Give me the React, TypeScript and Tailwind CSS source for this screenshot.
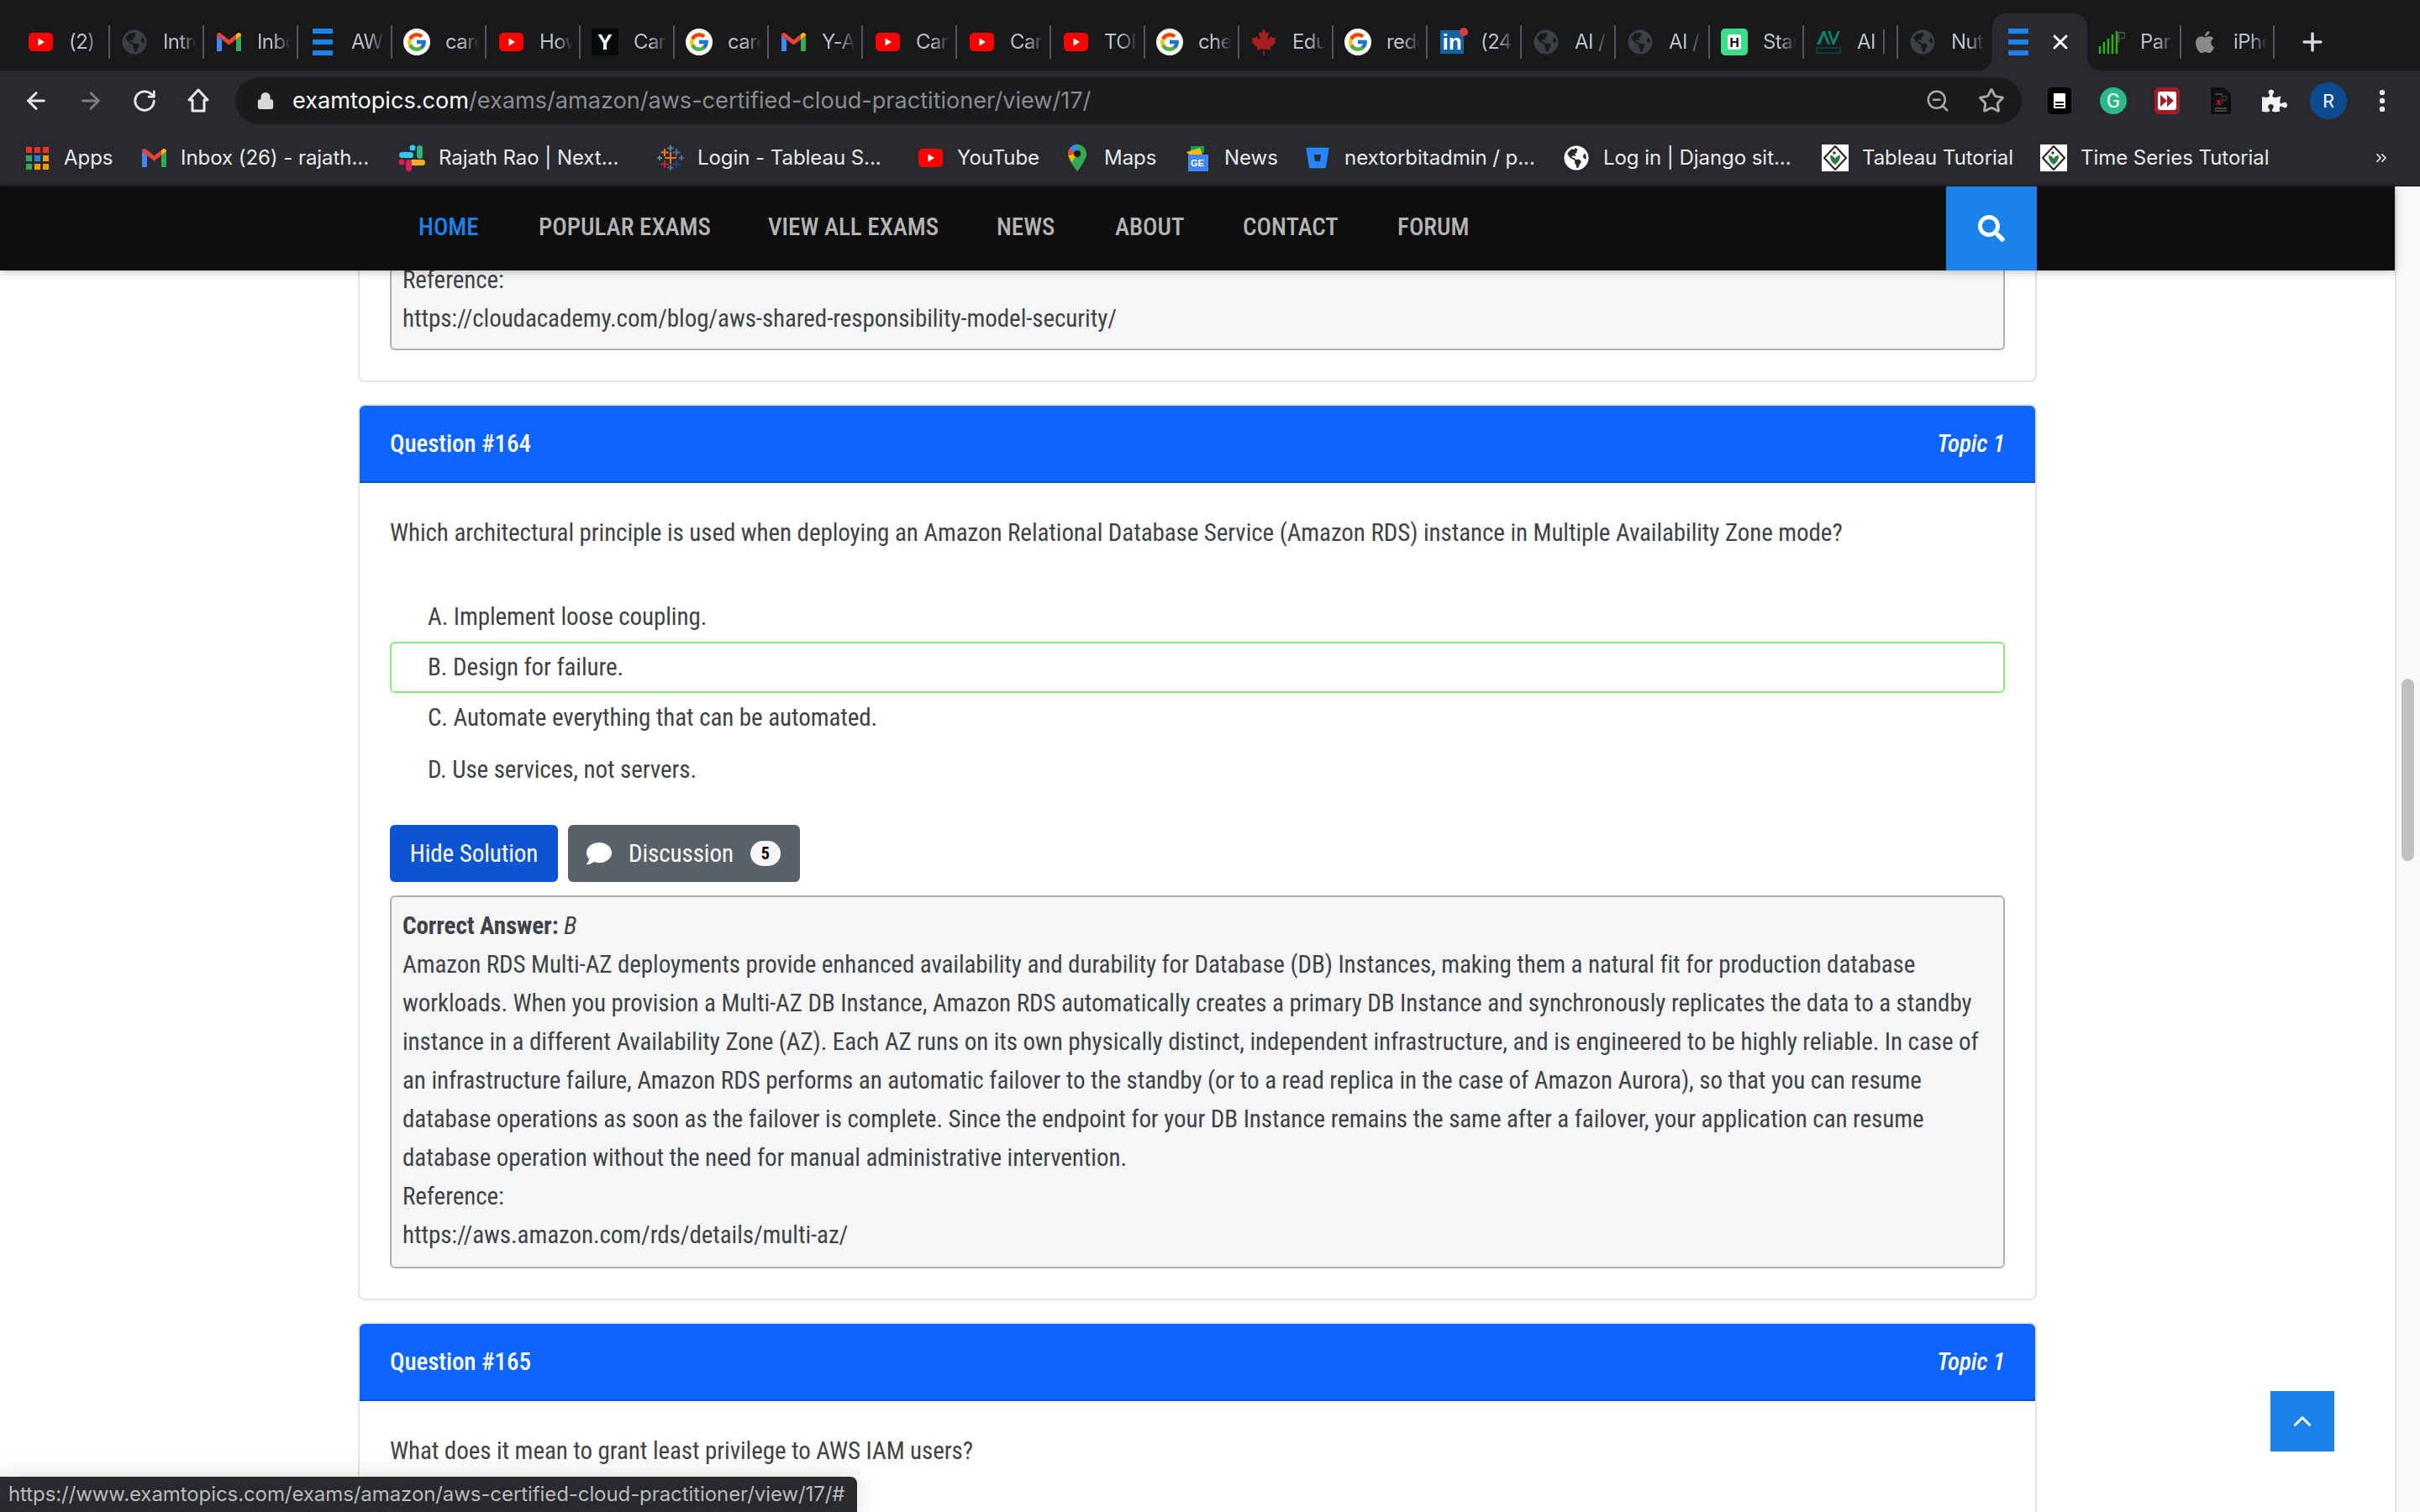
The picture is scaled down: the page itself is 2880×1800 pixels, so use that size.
import React from "react";
import { ArrowLeft, ArrowRight, RotateCw, Lock, ZoomOut, Star, MoreVertical, Plus, X, ChevronUp, ChevronsRight } from "lucide-react";
import { FaApple, FaCanadianMapleLeaf, FaGlobeAmericas, FaPuzzlePiece, FaSearch, FaComment, FaBitbucket } from "react-icons/fa";
import { FcGoogle } from "react-icons/fc";

const Yt = () => (
  <svg width="29" height="22" viewBox="0 0 29 22"><rect width="29" height="22" rx="5" fill="#f00" /><path d="M11.5 6.5 19 11l-7.5 4.5z" fill="#fff" /></svg>
);
const Globe = ({ c = "#3c4043" }: { c?: string }) => <FaGlobeAmericas size={30} color={c} />;
const Gmail = () => (
  <svg width="29" height="22" viewBox="0 0 29 22">
    <path d="M0 3v19h6V8z" fill="#4285f4" /><path d="M23 8v14h6V3z" fill="#34a853" />
    <path d="M0 3c0-3 3-4 5-2l9.500 7.500L24 1c2-2 5-1 5 2l-6 5-8.500 6.500L6 8z" fill="#ea4335" />
    <path d="M23 8l6-5c0-2-2-3.500-4-2.500l-2 1.500z" fill="#fbbc04" />
  </svg>
);
const Bars = () => (
  <div className="flex h-[32px] w-[24px] flex-col justify-between">
    <div className="h-[6px] rounded-[1px] bg-[#1a82e8]" /><div className="h-[6px] rounded-[1px] bg-[#1a82e8]" /><div className="h-[6px] rounded-[1px] bg-[#1a82e8]" />
  </div>
);
const G = () => (
  <div className="flex h-[32px] w-[32px] items-center justify-center rounded-full bg-white"><FcGoogle size={26} /></div>
);
const YC = () => (
  <div className="flex h-[32px] w-[32px] items-center justify-center bg-[#050b0b] text-[26px] font-bold leading-none text-white" style={{ fontFamily: "Liberation Sans" }}>Y</div>
);
const Li = () => (
  <div className="relative h-[28px] w-[28px]">
    <div className="flex h-[28px] w-[28px] items-end justify-center bg-[#1464a5] text-[26px] font-bold leading-[28px] text-white" style={{ fontFamily: "Liberation Sans" }}>in</div>
    <div className="absolute -right-[5px] -top-[3px] h-[10px] w-[10px] rounded-full bg-[#e03a3a]" />
  </div>
);
const Hchat = () => (
  <div className="flex h-[32px] w-[32px] items-center justify-center rounded-[5px] bg-[#3ddc8a]">
    <div className="flex h-[18px] w-[16px] items-center justify-center rounded-[3px] bg-white text-[15px] font-bold leading-none text-black">H</div>
  </div>
);
const AV = () => (
  <svg width="30" height="30" viewBox="0 0 30 30">
    <path d="M1 18 8 2h3l6 16h-3L9.500 7 5 18zM14 2h3l4 11 5-11h3l-7 16h-2z" fill="#0f7f70" />
    <rect x="1" y="22" width="28" height="6" fill="none" stroke="#0f5f56" strokeWidth="1" />
  </svg>
);
const Para = () => (
  <svg width="32" height="30" viewBox="0 0 32 30">
    <path d="M2 29v-9M7 29V15M12 29V11M17 29V6M22 29V2" stroke="#32b018" strokeWidth="2.500" />
    <text x="22" y="16" fontSize="18" fill="#555" fontFamily="Liberation Sans">P</text>
  </svg>
);
const Apps = () => (
  <div className="grid w-[27px] grid-cols-3 gap-[3px]">
    {["bg-[#ea3323]","bg-[#ea3323]","bg-[#ea3323]","bg-[#34a853]","bg-[#2b7de9]","bg-[#f29900]","bg-[#34a853]","bg-[#f29900]","bg-[#f29900]"].map((c, i) => (
      <div key={i} className={"h-[7px] w-[7px] " + c} />
    ))}
  </div>
);
const Slack = () => (
  <svg width="32" height="32" viewBox="0 0 32 32">
    <circle cx="17" cy="4" r="3.500" fill="#36c5f0" />
    <rect x="1" y="9" width="17" height="7" rx="3.500" fill="#36c5f0" />
    <rect x="22" y="1" width="7" height="16" rx="3.500" fill="#2eb67d" />
    <rect x="14" y="18" width="18" height="7" rx="3.500" fill="#ecb22e" />
    <rect x="9" y="18" width="7" height="14" rx="3.500" fill="#e01e5a" />
    <circle cx="4" cy="21" r="3.500" fill="#e01e5a" />
  </svg>
);
const Tableau = () => (
  <svg width="32" height="32" viewBox="0 0 32 32" strokeWidth="2" fill="none">
    <path d="M16 9v14M9 16h14" stroke="#e8762d" /><path d="M9 5v9M4.500 9.500h9" stroke="#e8762d" />
    <path d="M16 1v7M12.500 4.500h7" stroke="#5b879b" /><path d="M23 5v9M18.500 9.500h9" stroke="#5b6591" />
    <path d="M9 19v9M4.500 23.500h9" stroke="#c72035" /><path d="M23 19v9M18.500 23.500h9" stroke="#1f447e" />
    <path d="M16 24v7M12.500 27.500h7" stroke="#5b6591" /><path d="M3 13v6M0 16h6" stroke="#5b879b" /><path d="M29 13v6M26 16h6" stroke="#5b6591" />
  </svg>
);
const Maps = () => (
  <svg width="22" height="32" viewBox="0 0 22 32">
    <path d="M11 0C5 0 0 5 0 11c0 8 11 21 11 21s11-13 11-21C22 5 17 0 11 0z" fill="#34a853" />
    <path d="M11 0C7 0 3.500 2 1.500 5.500L11 11z" fill="#4285f4" /><path d="M1.500 5.500C0 8 0 11 .5 13L11 11z" fill="#ea4335" />
    <path d="M.5 13c1 3 2.500 5 4 8L11 11z" fill="#fbbc04" /><circle cx="11" cy="11" r="4" fill="#1a1a1a" />
  </svg>
);
const News = () => (
  <svg width="28" height="32" viewBox="0 0 28 32">
    <path d="M6 2h16v8H6z" fill="#0f9d58" /><path d="M1 9l16-5 3 8H4z" fill="#fbbc04" />
    <rect x="3" y="12" width="24" height="20" fill="#4285f4" />
    <text x="6" y="26" fontSize="11" fontWeight="700" fill="#fff" fontFamily="Liberation Sans">GE</text>
  </svg>
);
const Diamond = () => (
  <div className="flex h-[32px] w-[32px] items-center justify-center bg-white">
    <svg width="28" height="30" viewBox="0 0 28 30">
      <path d="M14 1 27 15 14 29 1 15z" fill="#fff" stroke="#222" strokeWidth="2" />
      <path d="M8 12c0 6 3 9 6 11 3-2 6-5 6-11-3 0-5 2-6 4-1-2-3-4-6-4z" fill="#2c7a3c" />
      <circle cx="13" cy="9" r="1.800" fill="#333" />
    </svg>
  </div>
);
const HomeIcon = () => (
  <svg width="28" height="30" viewBox="0 0 28 30" className="ml-[35px]">
    <path d="M14 2 25 14h-4v13H7V14H3z" fill="none" stroke="#e8eaed" strokeWidth="3" strokeLinejoin="round" />
  </svg>
);

const tabs: { i: React.ReactNode; t: string; s?: boolean }[] = [
  { i: <Yt />, t: "(2) YouTube" },
  { i: <Globe />, t: "Introduction" },
  { i: <Gmail />, t: "Inbox (26)" },
  { i: <Bars />, t: "AWS Certified" },
  { i: <G />, t: "career" },
  { i: <Yt />, t: "How to" },
  { i: <YC />, t: "Career" },
  { i: <G />, t: "career" },
  { i: <Gmail />, t: "Y-Axis" },
  { i: <Yt />, t: "Career" },
  { i: <Yt />, t: "Career" },
  { i: <Yt />, t: "TOP" },
  { i: <G />, t: "check" },
  { i: <FaCanadianMapleLeaf size={32} color="#a81f1f" />, t: "Education" },
  { i: <G />, t: "redd" },
  { i: <Li />, t: "(24) Li" },
  { i: <Globe />, t: "AI / ML" },
  { i: <Globe />, t: "AI / ML" },
  { i: <Hchat />, t: "Start" },
  { i: <AV />, t: "AI | M" },
  { i: <Globe />, t: "Nuts", s: true },
];
const tabsAfter: { i: React.ReactNode; t: string }[] = [
  { i: <Para />, t: "Para" },
  { i: <FaApple size={30} color="#8a8a8a" />, t: "iPhone" },
];

function Tab({ i, t, s }: { i: React.ReactNode; t: string; s?: boolean }) {
  return (
    <div className={"flex h-[40px] w-[112px] shrink-0 items-center border-r-2 pl-[13px] " + (s ? "border-transparent" : "border-[#55575a]")}>
      <div className="flex w-[32px] shrink-0 justify-center">{i}</div>
      <div className="ml-[18px] w-[40px] overflow-hidden whitespace-nowrap text-[24px] tracking-[-0.6px] text-[#bdc1c6] [mask-image:linear-gradient(to_right,black_50%,transparent)]">{t}</div>
    </div>
  );
}

const bookmarks: { i: React.ReactNode; t: string; w: string }[] = [
  { i: <Apps />, t: "Apps", w: "w-[139px]" },
  { i: <Gmail />, t: "Inbox (26) - rajath...", w: "w-[307px]" },
  { i: <Slack />, t: "Rajath Rao | Next...", w: "w-[308px]" },
  { i: <Tableau />, t: "Login - Tableau S...", w: "w-[309px]" },
  { i: <Yt />, t: "YouTube", w: "w-[175px]" },
  { i: <Maps />, t: "Maps", w: "w-[143px]" },
  { i: <News />, t: "News", w: "w-[143px]" },
  { i: <FaBitbucket size={28} color="#2684ff" />, t: "nextorbitadmin / p...", w: "w-[308px]" },
  { i: <FaGlobeAmericas size={30} color="#fff" />, t: "Log in | Django sit...", w: "w-[308px]" },
  { i: <Diamond />, t: "Tableau Tutorial", w: "w-[260px]" },
  { i: <Diamond />, t: "Time Series Tutorial", w: "w-[300px]" },
];

const nav = [
  { t: "HOME", c: "w-[143px] text-[#1a82e8]" },
  { t: "POPULAR EXAMS", c: "w-[273px]" },
  { t: "VIEW ALL EXAMS", c: "w-[272px]" },
  { t: "NEWS", c: "w-[141px]" },
  { t: "ABOUT", c: "w-[152px]" },
  { t: "CONTACT", c: "w-[184px]" },
  { t: "FORUM", c: "w-[100px]" },
];

const answer = [
  "Amazon RDS Multi-AZ deployments provide enhanced availability and durability for Database (DB) Instances, making them a natural fit for production database",
  "workloads. When you provision a Multi-AZ DB Instance, Amazon RDS automatically creates a primary DB Instance and synchronously replicates the data to a standby",
  "instance in a different Availability Zone (AZ). Each AZ runs on its own physically distinct, independent infrastructure, and is engineered to be highly reliable. In case of",
  "an infrastructure failure, Amazon RDS performs an automatic failover to the standby (or to a read replica in the case of Amazon Aurora), so that you can resume",
  "database operations as soon as the failover is complete. Since the endpoint for your DB Instance remains the same after a failover, your application can resume",
  "database operation without the need for manual administrative intervention.",
  "Reference:",
  "https://aws.amazon.com/rds/details/multi-az/",
];

function Header({ n }: { n: string }) {
  return (
    <div className="flex h-[92px] items-center justify-between rounded-t-[6px] border-b-2 border-[#0a54d0] bg-[#0d64fe] px-[36px] text-[29px] font-medium text-white">
      <span>{n}</span>
      <span className="italic">Topic 1</span>
    </div>
  );
}

export default function App() {
  const ui = { fontFamily: "Inter, 'Liberation Sans', sans-serif" };
  return (
    <div className="relative flex h-[1800px] w-[2880px] flex-col overflow-hidden bg-white" style={{ fontFamily: "Roboto, sans-serif" }}>
      {/* tab strip */}
      <div className="flex h-[84px] items-center bg-[#18191b] pl-[19px] pt-[16px]" style={ui}>
        {tabs.map((t, k) => <Tab key={k} {...t} />)}
        <div className="relative flex h-[68px] w-[113px] shrink-0 items-center self-end rounded-t-[16px] bg-[#292a2d] pl-[19px]">
          <span className="absolute -left-[16px] bottom-0 h-[16px] w-[16px] bg-[radial-gradient(circle_at_0_0,#18191b_15.500px,#292a2d_16px)]" />
          <span className="absolute -right-[16px] bottom-0 h-[16px] w-[16px] bg-[radial-gradient(circle_at_100%_0,#18191b_15.500px,#292a2d_16px)]" />
          <Bars />
          <X size={28} color="#fff" strokeWidth={2.500} className="ml-[24px]" />
        </div>
        <div className="w-[111px] shrink-0"><Tab {...tabsAfter[0]} /></div>
        <Tab {...tabsAfter[1]} />
        <Plus size={34} color="#d5d7da" strokeWidth={2.500} className="ml-[28px]" />
      </div>
      {/* toolbar */}
      <div className="flex h-[72px] items-center bg-[#292a2d] pl-[27px]">
        <ArrowLeft size={32} color="#e8eaed" strokeWidth={2.200} />
        <ArrowRight size={32} color="#7b7d80" strokeWidth={2.200} className="ml-[33px]" />
        <RotateCw size={30} color="#e8eaed" strokeWidth={2.200} className="ml-[33px]" />
        <HomeIcon />
        <div className="ml-[30px] flex h-[56px] w-[2126px] items-center rounded-full bg-[#1a1b1d] pl-[25px] pr-[20px] text-[27.100px]" style={ui}>
          <Lock size={22} color="#d8d8d8" fill="#d8d8d8" />
          <span className="ml-[21px] text-white">examtopics.com</span>
          <span className="text-[#8b8d90]">/exams/amazon/aws-certified-cloud-practitioner/view/17/</span>
          <ZoomOut size={30} color="#a8a9ab" className="ml-auto" strokeWidth={2} />
          <Star size={32} color="#a8a9ab" className="ml-[33px]" strokeWidth={2.200} />
        </div>
        <div className="ml-[13px] flex w-[64px] justify-center">
          <div className="flex h-[32px] w-[28px] items-center justify-center rounded-[5px] bg-black">
            <div className="flex h-[18px] w-[14px] flex-col justify-end gap-[2px] rounded-[1px] bg-white px-[2px] pb-[2px]">
              <div className="h-[2px] bg-black" /><div className="h-[2px] bg-black" />
            </div>
          </div>
        </div>
        <div className="flex w-[64px] justify-center">
          <div className="flex h-[32px] w-[32px] items-center justify-center rounded-full bg-[#2bb988] text-[24px] leading-none text-white">G</div>
        </div>
        <div className="flex w-[64px] justify-center">
          <div className="flex h-[32px] w-[30px] items-center justify-center rounded-[5px] bg-[#a31b23]">
            <div className="flex h-[22px] w-[22px] items-center justify-center rounded-[3px] bg-white">
              <svg width="16" height="14" viewBox="0 0 16 14"><path d="M0 0l8 7-8 7zM8 0l8 7-8 7z" fill="#a31b23" /></svg>
            </div>
          </div>
        </div>
        <div className="flex w-[64px] justify-center">
          <svg width="24" height="32" viewBox="0 0 24 32"><path d="M1 1h15l7 7v23H1z" fill="#111" stroke="#000" /><path d="M5 8h9M5 25h14M5 28h14" stroke="#555" strokeWidth="1.500" /><text x="6" y="21" fontSize="11" fontWeight="700" fill="#e11" fontFamily="Liberation Sans">x</text><text x="12" y="19" fontSize="12" fill="#444" fontFamily="Liberation Sans">P</text></svg>
        </div>
        <div className="flex w-[64px] justify-center"><FaPuzzlePiece size={30} color="#f1f3f4" /></div>
        <div className="flex w-[64px] justify-center">
          <div className="flex h-[44px] w-[44px] items-center justify-center rounded-full bg-[#0c4a92] text-[22px] text-white">R</div>
        </div>
        <div className="flex w-[64px] justify-center"><MoreVertical size={34} color="#e8eaed" strokeWidth={2.500} /></div>
      </div>
      {/* bookmarks */}
      <div className="flex h-[66px] items-center border-b-2 border-[#222326] bg-[#292a2d] pl-[28px] text-[24px] tracking-[-0.05px] text-[#e8eaed]" style={ui}>
        {bookmarks.map((b) => (
          <div key={b.t} className={"flex shrink-0 items-center " + b.w}>
            <div className="flex w-[32px] justify-center">{b.i}</div>
            <span className="ml-[16px] whitespace-nowrap">{b.t}</span>
          </div>
        ))}
        <ChevronsRight size={20} color="#e8eaed" className="ml-[96px]" />
      </div>
      {/* page */}
      <div className="flex min-h-0 flex-1">
        <div className="flex min-w-0 flex-1 flex-col">
          <div className="relative z-10 flex h-[100px] shrink-0 items-center bg-[#0e0e0e] pl-[498px] text-[29px] font-medium text-[#b4b4b4] shadow-[0_2px_10px_rgba(0,0,0,0.25)]">
            {nav.map((n) => (
              <span key={n.t} className={"shrink-0 -translate-y-[1px] [font-stretch:85%] " + n.c}>{n.t}</span>
            ))}
            <div className="ml-[553px] flex h-[100px] w-[108px] items-center justify-center bg-[#1a82e8]">
              <FaSearch size={32} color="#fff" />
            </div>
          </div>
          <div className="-mt-[12px] ml-[426px] w-[1998px] text-[29px] leading-[46px] tracking-[-0.07px] text-[#3f4246] [font-stretch:85%]">
            {/* previous card */}
            <div className="rounded-b-[8px] border-2 border-t-0 border-[#e2e2e2] px-[36px] pb-[36px]">
              <div className="rounded-b-[6px] border-2 border-t-0 border-[#b0b0b0] bg-[#f5f6f8] px-[13px] pb-[13px]">
                <div>Reference:</div>
                <div>https://cloudacademy.com/blog/aws-shared-responsibility-model-security/</div>
              </div>
            </div>
            {/* question 164 */}
            <div className="mt-[26px] rounded-[8px] border-2 border-[#e2e2e2] pb-[36px]">
              <Header n="Question #164" />
              <div className="px-[36px]">
                <p className="pt-[36px]">Which architectural principle is used when deploying an Amazon Relational Database Service (Amazon RDS) instance in Multiple Availability Zone mode?</p>
                <div className="mt-[48px] flex h-[59px] items-center pb-[2px] pl-[45px]">A. Implement loose coupling.</div>
                <div className="flex h-[61px] items-center rounded-[6px] border-2 border-[#86ea7e] pb-[2px] pl-[43px]">B. Design for failure.</div>
                <div className="flex h-[59px] items-center pb-[2px] pl-[45px]">C. Automate everything that can be automated.</div>
                <div className="mt-[3px] flex h-[60px] items-center pb-[2px] pl-[45px]">D. Use services, not servers.</div>
                <div className="mt-[35px] flex gap-[12px] text-white">
                  <div className="flex h-[68px] w-[200px] items-center justify-center rounded-[6px] bg-[#0c54d2]">Hide Solution</div>
                  <div className="flex h-[68px] w-[276px] items-center rounded-[6px] bg-[#5a6269] pl-[22px]">
                    <FaComment size={30} color="#fff" />
                    <span className="ml-[20px]">Discussion</span>
                    <span className="ml-[20px] flex h-[30px] w-[36px] items-center justify-center rounded-full bg-[#f5f6f8] text-[20px] font-bold text-black">5</span>
                  </div>
                </div>
                <div className="mt-[16px] rounded-[6px] border-2 border-[#b0b0b0] bg-[#f5f6f8] px-[13px] pb-[15px] pt-[11px]">
                  <div><b className="font-bold">Correct Answer:</b> <i>B</i></div>
                  {answer.map((l) => <div key={l} className="whitespace-nowrap">{l}</div>)}
                </div>
              </div>
            </div>
            {/* question 165 */}
            <div className="mt-[26px] rounded-[8px] border-2 border-[#e2e2e2] pb-[200px]">
              <Header n="Question #165" />
              <div className="px-[36px]">
                <p className="pt-[36px]">What does it mean to grant least privilege to AWS IAM users?</p>
              </div>
            </div>
          </div>
        </div>
        {/* scrollbar */}
        <div className="w-[30px] shrink-0 border-l-2 border-[#e4e4e4] bg-[#f9f9f9] pl-[6px] pt-[586px]">
          <div className="h-[217px] w-[15px] rounded-full bg-[#c1c1c1]" />
        </div>
      </div>
      {/* scroll top button */}
      <div className="absolute left-[2702px] top-[1656px] flex h-[72px] w-[76px] items-center justify-center bg-[#1a82e8]">
        <ChevronUp size={34} color="#fff" strokeWidth={2.200} />
      </div>
      {/* status bubble */}
      <div className="absolute bottom-0 left-0 flex h-[42px] w-[1020px] items-center rounded-tr-[8px] bg-[#292a2d] pl-[10px] text-[24px] tracking-[-0.08px] text-[#b9bbbe] shadow-[0_0_30px_rgba(0,0,0,0.15)]" style={ui}>
        https://www.examtopics.com/exams/amazon/aws-certified-cloud-practitioner/view/17/#
      </div>
    </div>
  );
}
